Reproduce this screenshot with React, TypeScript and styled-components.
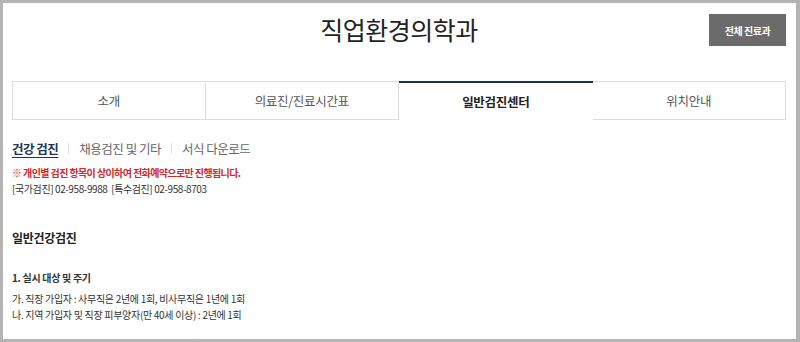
import React from 'react';
import styled, { createGlobalStyle } from 'styled-components';

const GlobalStyle = createGlobalStyle`
  html, body {
    margin: 0;
    padding: 0;
    background: #b4b4b4;
  }
  body {
    font-family: "Noto Sans CJK KR", "Noto Sans", sans-serif;
    color: #333;
  }
  * { box-sizing: border-box; }
`;

const Frame = styled.div`
  width: 800px;
  height: 342px;
  padding: 3px 4px 3px 3px;
  background: #b4b4b4;
`;

const Page = styled.div`
  width: 100%;
  height: 100%;
  background: #fff;
  padding: 0 10px 0 9px;
  overflow: hidden;
`;

const Header = styled.div`
  height: 78px;
  display: grid;
  grid-template-columns: 1fr auto 1fr;
  align-items: start;
`;

const Title = styled.h1`
  grid-column: 2;
  margin: 9px 0 0;
  font-size: 25px;
  font-weight: 400;
  letter-spacing: -0.5px;
  color: #222;
  line-height: 34px;
`;

const AllButton = styled.button`
  grid-column: 3;
  justify-self: end;
  margin-top: 11px;
  width: 77px;
  height: 32px;
  border: none;
  background: #6b6b6b;
  color: #fff;
  font-family: inherit;
  font-size: 10px;
  font-weight: 700;
  letter-spacing: -0.5px;
  padding: 0;
`;

const Tabs = styled.div`
  display: grid;
  grid-template-columns: repeat(4, 1fr);
  height: 39px;
`;

const Tab = styled.div<{ $active?: boolean }>`
  display: flex;
  align-items: center;
  justify-content: center;
  font-size: 12.5px;
  letter-spacing: -0.3px;
  color: ${({ $active }) => ($active ? '#222' : '#555')};
  font-weight: ${({ $active }) => ($active ? 700 : 400)};
  border: 1px solid #dcdcdc;
  border-left-width: 0;
  &:first-child { border-left-width: 1px; }
  ${({ $active }) =>
    $active &&
    `
    border: none;
    border-top: 2px solid #1d2f4f;
  `}
`;

const SubNav = styled.div`
  display: flex;
  align-items: center;
  margin-top: 18px;
  height: 20px;
`;

const SubLink = styled.span<{ $active?: boolean }>`
  font-size: 12.5px;
  letter-spacing: -0.5px;
  color: ${({ $active }) => ($active ? '#1d3358' : '#666')};
  font-weight: ${({ $active }) => ($active ? 700 : 400)};
  text-decoration: ${({ $active }) => ($active ? 'underline' : 'none')};
  text-underline-offset: 3px;
`;

const Divider = styled.span`
  width: 1px;
  height: 11px;
  background: #ddd;
  margin: 0 10px;
`;

const Notice = styled.p`
  margin: 7px 0 0;
  font-size: 10px;
  font-weight: 700;
  letter-spacing: -0.6px;
  color: #d8232a;
  line-height: 16px;
`;

const Phones = styled.p`
  margin: 0;
  font-size: 10px;
  letter-spacing: -0.4px;
  color: #333;
  line-height: 16px;
  white-space: pre;
`;

const SectionTitle = styled.h2`
  margin: 32px 0 0;
  font-size: 12px;
  font-weight: 700;
  letter-spacing: -0.3px;
  color: #222;
  line-height: 18px;
`;

const List = styled.div`
  margin-top: 22px;
  display: flex;
  flex-direction: column;
`;

const Line = styled.p<{ $bold?: boolean }>`
  margin: 0;
  font-size: 10px;
  letter-spacing: -0.3px;
  line-height: 18px;
  color: #333;
  font-weight: ${({ $bold }) => ($bold ? 700 : 400)};
  margin-bottom: ${({ $bold }) => ($bold ? '3px' : '-2px')};
`;

const tabs = ['소개', '의료진/진료시간표', '일반검진센터', '위치안내'];

export default function App() {
  return (
    <>
      <GlobalStyle />
      <Frame>
        <Page>
          <Header>
            <Title>직업환경의학과</Title>
            <AllButton>전체 진료과</AllButton>
          </Header>
          <Tabs>
            {tabs.map((t, i) => (
              <Tab key={t} $active={i === 2}>
                {t}
              </Tab>
            ))}
          </Tabs>
          <SubNav>
            <SubLink $active>건강 검진</SubLink>
            <Divider />
            <SubLink>채용검진 및 기타</SubLink>
            <Divider />
            <SubLink>서식 다운로드</SubLink>
          </SubNav>
          <Notice>※ 개인별 검진 항목이 상이하여 전화예약으로만 진행됩니다.</Notice>
          <Phones>[국가검진] 02-958-9988  [특수검진] 02-958-8703</Phones>
          <SectionTitle>일반건강검진</SectionTitle>
          <List>
            <Line $bold>1. 실시 대상 및 주기</Line>
            <Line>가. 직장 가입자 : 사무직은 2년에 1회, 비사무직은 1년에 1회</Line>
            <Line>나. 지역 가입자 및 직장 피부양자(만 40세 이상) : 2년에 1회</Line>
          </List>
        </Page>
      </Frame>
    </>
  );
}
